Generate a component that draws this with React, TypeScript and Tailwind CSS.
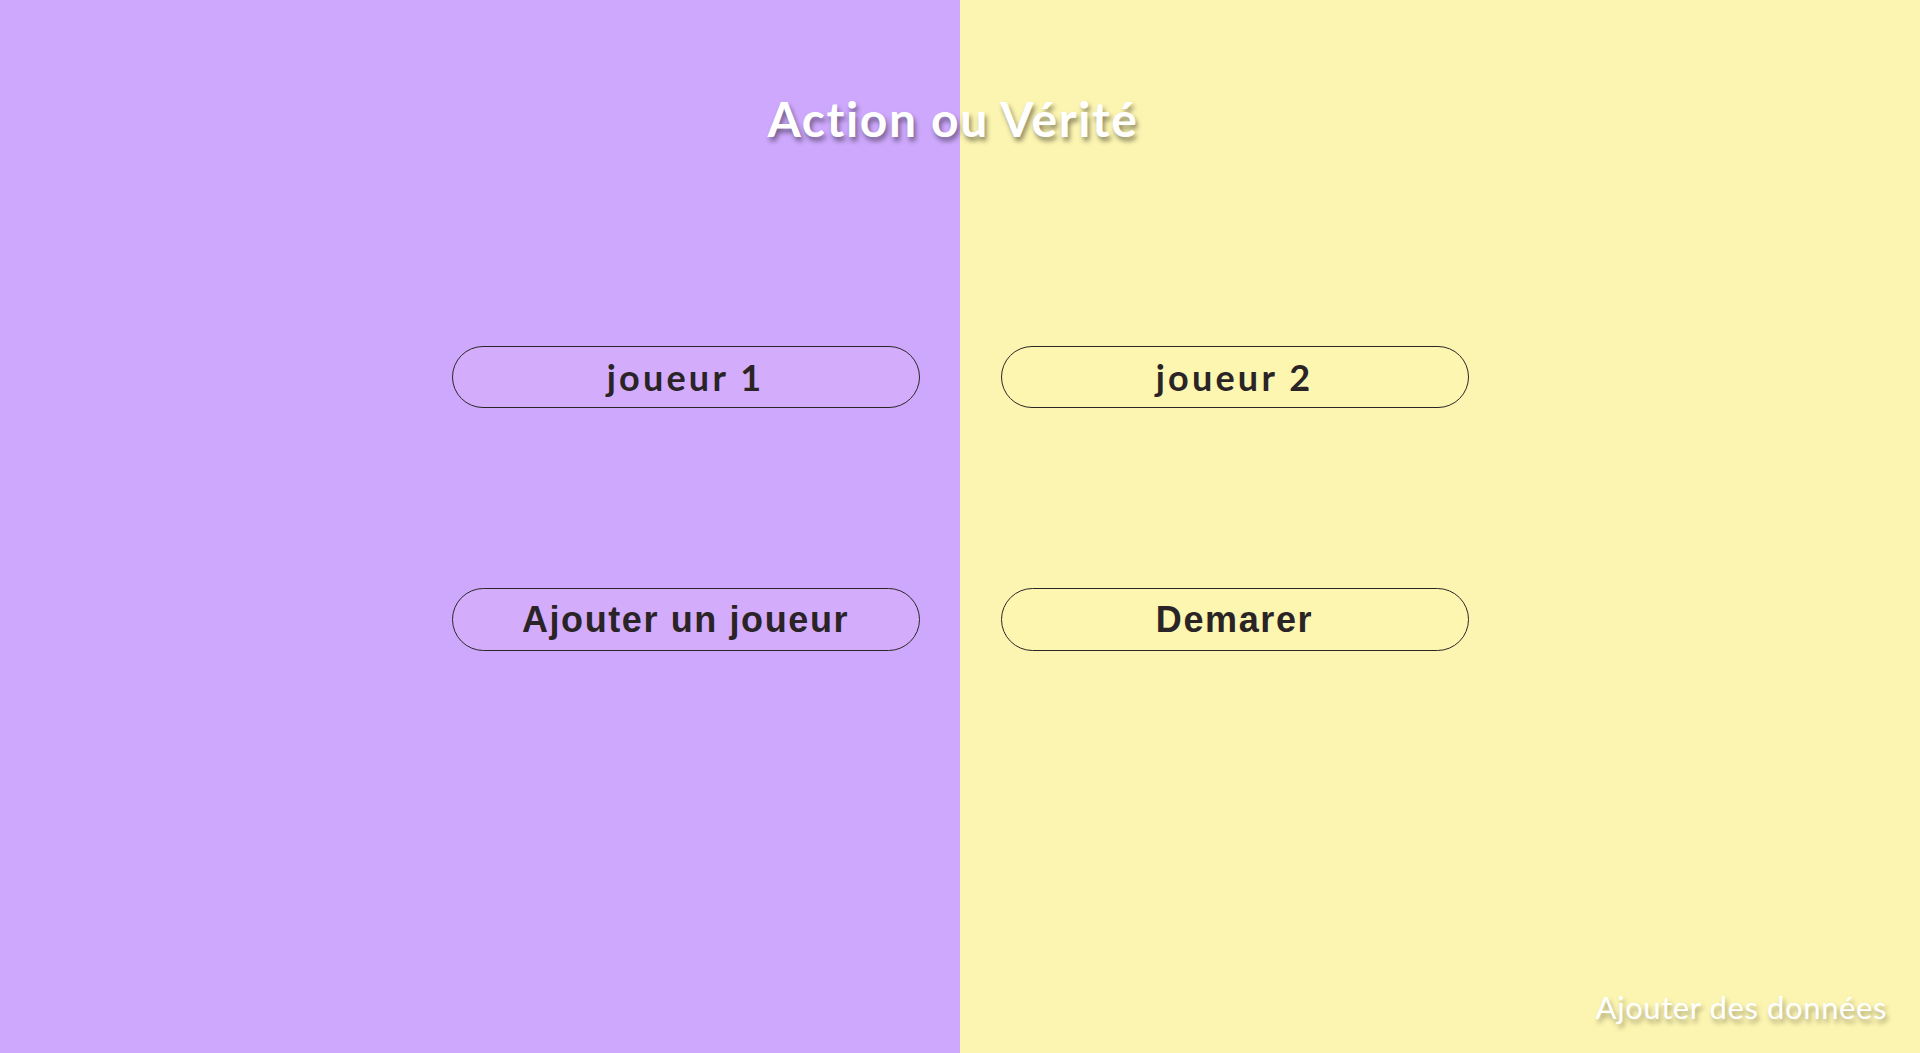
const players = ["joueur 1", "joueur 2"];

export default function App() {
  return (
    <div className="flex min-h-screen flex-col bg-[linear-gradient(to_right,#cea8fd_50%,#fcf5b1_50%)] font-['Lato','Liberation_Sans',sans-serif]">
      <h1 className="mt-[90px] pr-[14px] text-center text-[48px] font-bold leading-[58px] tracking-[1.6px] text-white [text-shadow:2px_4px_5px_rgba(0,0,0,0.45)]">
        Action ou Vérité
      </h1>

      <div className="mx-auto mt-[198px] grid grid-cols-[468px_468px] gap-x-[81px] gap-y-[180px]">
        {players.map((p, i) => (
          <button
            key={p}
            className={
              "h-[62px] rounded-full border border-[#2b2626] font-['Lato',sans-serif] text-[36px] font-bold tracking-[3.2px] text-[#2a2427] " +
              (i === 0 ? "bg-[#d3adfc]" : "bg-[#fcf6b0]")
            }
          >
            {p}
          </button>
        ))}
        <button className="h-[63px] rounded-full border border-[#2b2626] bg-[#d3adfc] font-['Liberation_Sans',Arial,sans-serif] text-[36px] font-bold tracking-[1.6px] text-[#2a2427]">
          Ajouter un joueur
        </button>
        <button className="h-[63px] rounded-full border border-[#2b2626] bg-[#fcf6b0] font-['Liberation_Sans',Arial,sans-serif] text-[36px] font-bold tracking-[1.6px] text-[#2a2427]">
          Demarer
        </button>
      </div>

      <div className="mt-auto mb-[26px] mr-[33px] self-end text-[31px] leading-[40px] tracking-[0.6px] text-white [text-shadow:2px_4px_5px_rgba(0,0,0,0.35)]">
        Ajouter des données
      </div>
    </div>
  );
}
